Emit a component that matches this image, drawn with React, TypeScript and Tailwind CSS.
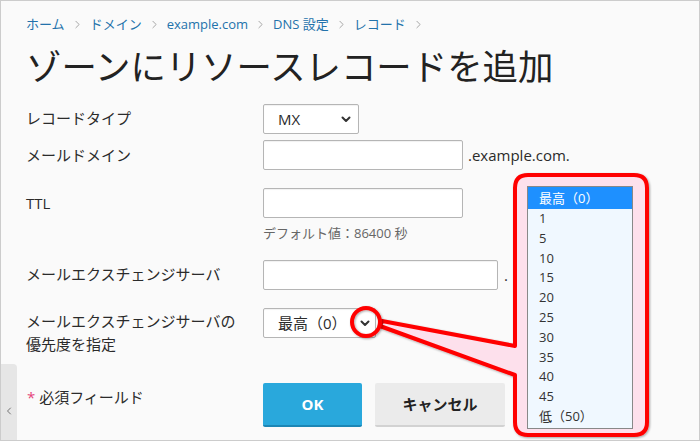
import React from "react";
import { ChevronRight, ChevronLeft } from "lucide-react";

const Chevron = () => (
  <svg width="10" height="7" viewBox="0 0 10 7" className="shrink-0">
    <path d="M1.5 1.5 L5 5 L8.5 1.5" fill="none" stroke="#333" strokeWidth="2" strokeLinecap="round" strokeLinejoin="round" />
  </svg>
);

const Crumb = ({ children }: { children: React.ReactNode }) => (
  <>
    <span className="text-[#2372ab]">{children}</span>
    <ChevronRight size={13} strokeWidth={1.6} className="mx-[6px] text-[#9a9a9a]" />
  </>
);

const inputCls = "h-[30px] bg-white border border-[#b5b5b5] rounded-[2px] shadow-[inset_0_1px_1px_rgba(0,0,0,0.06)]";

export default function App() {
  const items = ["1", "5", "10", "15", "20", "25", "30", "35", "40", "45", "低（50）"];
  return (
    <div className="relative w-[700px] h-[441px] overflow-hidden border border-[#cccccc] bg-[#fafafa] font-['Open_Sans','Noto_Sans_CJK_JP',sans-serif] text-[#2b2b2b]">
      <div className="pl-[25px] pt-[13px]">
        <div className="flex items-center h-[20px] text-[13px] leading-[20px]">
          <Crumb>ホーム</Crumb>
          <Crumb>ドメイン</Crumb>
          <Crumb>example.com</Crumb>
          <Crumb>DNS 設定</Crumb>
          <Crumb>レコード</Crumb>
        </div>
        <h1 className="mt-[10px] text-[35.4px] leading-[44px] font-normal text-[#222]">ゾーンにリソースレコードを追加</h1>

        <div className="text-[15px]">
          <div className="mt-[16px] flex h-[30px]">
            <div className="w-[237px] pt-[4px] leading-[20px]">レコードタイプ</div>
            <div className={`${inputCls} w-[96px] flex items-center justify-between pl-[14px] pr-[7px]`}>
              <span>MX</span>
              <Chevron />
            </div>
          </div>

          <div className="mt-[6px] flex h-[30px]">
            <div className="w-[237px] pt-[5px] leading-[20px]">メールドメイン</div>
            <div className={`${inputCls} w-[200px]`} />
            <div className="ml-[5px] leading-[30px]">.example.com.</div>
          </div>

          <div className="mt-[18px] flex">
            <div className="w-[237px] pt-[5px] leading-[20px]">TTL</div>
            <div>
              <div className={`${inputCls} w-[200px]`} />
              <div className="mt-[6px] text-[13px] leading-[18px] text-[#666]">デフォルト値：86400 秒</div>
            </div>
          </div>

          <div className="mt-[18px] flex h-[30px]">
            <div className="w-[237px] pt-[4px] leading-[20px]">メールエクスチェンジサーバ</div>
            <div className={`${inputCls} w-[235px]`} />
            <div className="ml-[6px] leading-[30px]">.</div>
          </div>

          <div className="mt-[18px] flex h-[50px]">
            <div className="w-[237px] pt-[2px] leading-[23px]">
              メールエクスチェンジサーバの
              <br />
              優先度を指定
            </div>
            <div className={`${inputCls} w-[113px] flex items-center justify-between pl-[14px] pr-[5px]`}>
              <span>最高（0）</span>
              <Chevron />
            </div>
          </div>

          <div className="mt-[25px] flex h-[44px]">
            <div className="w-[237px] pt-[4px] leading-[20px] pl-[1px]">
              <span className="text-[#e5457b]">*</span> 必須フィールド
            </div>
            <button className="w-[99px] h-[44px] bg-[#29a8dc] border-b-2 border-[#1c86b5] rounded-[2px] text-white font-bold text-[15px]">
              OK
            </button>
            <button className="ml-[13px] w-[130px] h-[44px] bg-[#ebebeb] border-b-2 border-[#d2d2d2] rounded-[2px] text-[#222] font-bold text-[15px]">
              キャンセル
            </button>
          </div>
        </div>
      </div>

      <div className="absolute left-0 top-[363px] w-[16px] h-[80px] bg-[#e6e6e6] rounded-tr-[4px] flex justify-center pt-[41px]">
        <ChevronLeft size={12} strokeWidth={1.6} className="text-[#555]" />
      </div>

      <svg className="absolute top-[-1px] left-[-1px] w-[700px] h-[441px] pointer-events-none" viewBox="0 0 700 441">
        <defs>
          <filter id="sh" x="-10%" y="-10%" width="130%" height="130%">
            <feDropShadow dx="1" dy="1" stdDeviation="0.8" floodColor="#000" floodOpacity="0.35" />
          </filter>
        </defs>
        <path
          d="M528 175 H634 Q647 175 647 188 V422 Q647 435 634 435 H528 Q515 435 515 422 V375 L380 326 L382 321 L515 346 V188 Q515 175 528 175 Z"
          fill="#fde0ec"
          stroke="#ff0000"
          strokeWidth="4"
          strokeLinejoin="round"
          filter="url(#sh)"
        />
        <circle cx="366" cy="322" r="14" fill="none" stroke="#ff0000" strokeWidth="4" filter="url(#sh)" />
      </svg>

      <div className="absolute left-[526px] top-[185px] w-[106px] h-[243px] bg-[#f0f8ff] border border-[#888] text-[13px] text-[#333]">
        <div className="h-[22px] bg-[#1e90ff] text-white pl-[11px] leading-[22px]">最高（0）</div>
        {items.map((t) => (
          <div key={t} className="h-[19.8px] leading-[19.8px] pl-[11px]">
            {t}
          </div>
        ))}
      </div>
    </div>
  );
}
